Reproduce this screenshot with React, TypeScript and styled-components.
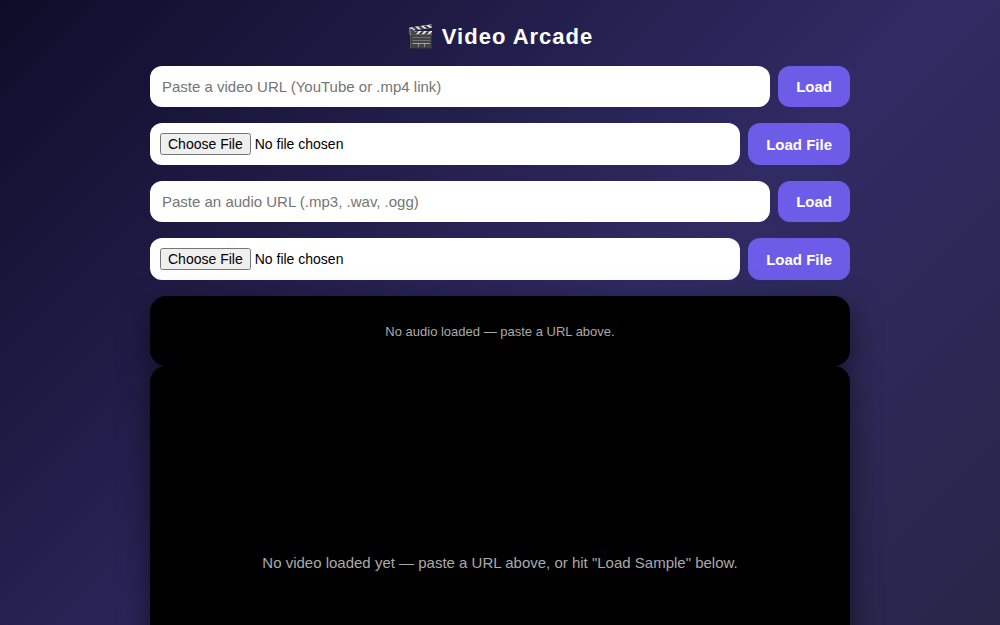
import React from "react"
import styled, { createGlobalStyle } from "styled-components"

const GlobalStyle = createGlobalStyle`
  * {
    box-sizing: border-box;
  }
  body {
    margin: 0;
    font-family: "Liberation Sans", Arial, sans-serif;
    background: linear-gradient(135deg, #0f0c29, #302b63, #24243e);
    color: #fff;
  }
`

const Page = styled.main`
  display: flex;
  flex-direction: column;
  align-items: center;
  min-height: 880px;
  padding: 24px 0;
`

const Title = styled.h1`
  margin: 0 0 16px;
  font-size: 22px;
  font-weight: 700;
  letter-spacing: 1px;
  text-align: center;
`

const Controls = styled.div`
  width: 700px;
  display: flex;
  flex-direction: column;
  gap: 16px;
  margin-bottom: 16px;
`

const Row = styled.div`
  display: flex;
  gap: 8px;
`

const Field = styled.input`
  flex: 1;
  min-width: 0;
  padding: 12px;
  border: none;
  border-radius: 12px;
  background: #fff;
  font-family: "Liberation Sans", Arial, sans-serif;
  font-size: 15px;
  color: #000;
  outline: none;

  &::placeholder {
    color: #757575;
  }
  &[type="file"] {
    padding: 10px;
    font-size: 14px;
  }
  &[type="file"]::file-selector-button {
    font-family: "Liberation Sans", Arial, sans-serif;
    font-size: 14px;
  }
`

const Button = styled.button`
  padding: 12px 18px;
  border: none;
  border-radius: 12px;
  background: #6c5ce7;
  color: #fff;
  font-family: "Liberation Sans", Arial, sans-serif;
  font-size: 15px;
  font-weight: 700;
  cursor: pointer;
`

const Stage = styled.section<{ $tall?: boolean }>`
  flex: none;
  width: 700px;
  ${(p) => (p.$tall ? "aspect-ratio: 16 / 9;" : "height: 70px;")}
  display: flex;
  align-items: center;
  justify-content: center;
  border-radius: 16px;
  background: #000;
  box-shadow: 0 10px 30px rgba(0, 0, 0, 0.5);
  color: #aaa;
  font-size: ${(p) => (p.$tall ? "15px" : "13px")};
`

export default function App() {
  return (
    <>
      <GlobalStyle />
      <Page>
        <Title>🎬 Video Arcade</Title>
        <Controls>
          <Row>
            <Field type="text" placeholder="Paste a video URL (YouTube or .mp4 link)" />
            <Button>Load</Button>
          </Row>
          <Row>
            <Field type="file" accept="video/*" />
            <Button>Load File</Button>
          </Row>
          <Row>
            <Field type="text" placeholder="Paste an audio URL (.mp3, .wav, .ogg)" />
            <Button>Load</Button>
          </Row>
          <Row>
            <Field type="file" accept="audio/*" />
            <Button>Load File</Button>
          </Row>
        </Controls>
        <Stage>No audio loaded — paste a URL above.</Stage>
        <Stage $tall>No video loaded yet — paste a URL above, or hit "Load Sample" below.</Stage>
      </Page>
    </>
  )
}
